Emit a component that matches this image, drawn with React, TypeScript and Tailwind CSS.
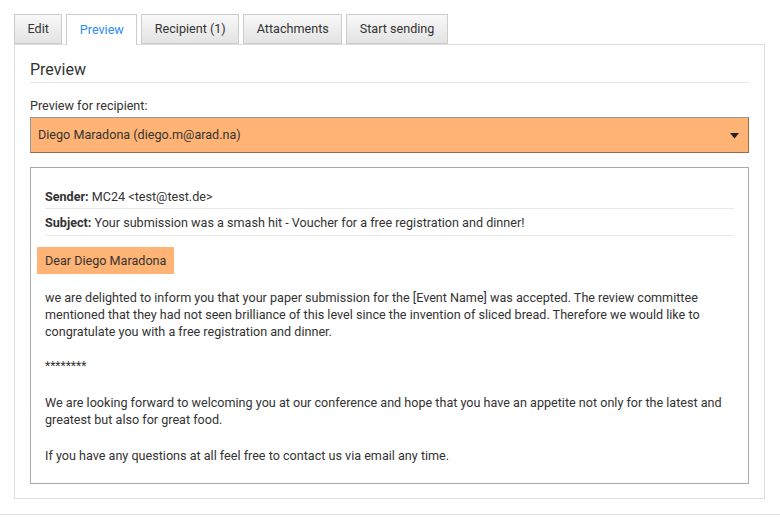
import { useState } from "react";

const tabs = ["Edit", "Preview", "Recipient (1)", "Attachments", "Start sending"];

export default function App() {
  const [active, setActive] = useState("Preview");

  return (
    <div className="min-h-screen bg-white font-['Roboto',sans-serif] text-[12.6px] text-[#333]">
      <div className="pl-[14px] pr-4 pt-[14px]">
        {/* tab bar */}
        <div className="flex gap-[4px]">
          {tabs.map((t) => (
            <button
              key={t}
              onClick={() => setActive(t)}
              className={
                active === t
                  ? "relative -mb-px h-[31px] border border-b-0 border-[#cccccc] bg-white px-[12.5px] text-[12.6px] text-[#2a8cf6]"
                  : "h-[30px] border border-[#cccccc] bg-gradient-to-b from-[#f8f8f8] to-[#e3e3e3] px-[12.5px] text-[12.6px] text-[#333]"
              }
            >
              {t}
            </button>
          ))}
        </div>

        {/* panel */}
        <div className="w-[751px] border border-[#dddddd] px-[15px] pb-[14px] pt-[14px]">
          <h2 className="border-b border-[#e5e5e5] pb-px text-[16px] leading-[22px] text-[#333]">Preview</h2>

          <div className="mt-[14px] leading-[17px]">Preview for recipient:</div>
          <div className="mt-[3px] flex h-[36px] items-center justify-between border border-[#999] border-b-[#9a6a44] border-r-[#9a6a44] bg-[#ffb374] pl-[7px] pr-[9px]">
            <span>Diego Maradona (diego.m@arad.na)</span>
            <svg width="9" height="6" viewBox="0 0 9 6" className="mt-[1px]">
              <path d="M0 0 H9 L4.5 5.5 Z" fill="#222" />
            </svg>
          </div>

          {/* mail preview */}
          <div className="mt-[14px] border border-[#aaaaaa] px-[14px] pb-[19px] pt-[14px] leading-[17px]">
            <div className="border-b border-[#e8e8e8] pb-[3px] pt-[6px]">
              <b className="font-bold">Sender:</b> MC24 &lt;test@test.de&gt;
            </div>
            <div className="border-b border-[#e8e8e8] pb-[4px] pt-[5px]">
              <b className="font-bold">Subject:</b> Your submission was a smash hit - Voucher for a free registration and dinner!
            </div>

            <div className="-ml-[8px] mt-[11px] inline-block bg-[#ffb374] px-[8px] py-[5px]">Dear Diego Maradona</div>

            <p className="mt-[15px]">
              we are delighted to inform you that your paper submission for the [Event Name] was accepted. The review committee
              mentioned that they had not seen brilliance of this level since the invention of sliced bread. Therefore we would like to
              congratulate you with a free registration and dinner.
            </p>
            <p className="mt-[18px] text-[12px] leading-[17px]">********</p>
            <p className="mt-[19px]">
              We are looking forward to welcoming you at our conference and hope that you have an appetite not only for the latest and
              greatest but also for great food.
            </p>
            <p className="mt-[19px]">If you have any questions at all feel free to contact us via email any time.</p>
          </div>
        </div>
      </div>
      <div className="mt-[15px] border-t border-[#dddddd]" />
    </div>
  );
}
